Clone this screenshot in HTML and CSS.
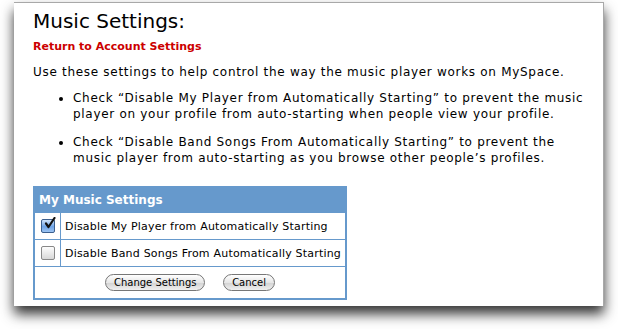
FILE: index.html
```html
<!DOCTYPE html>
<html lang="en">
<head>
    <meta charset="UTF-8">
    <title>Music Settings</title>
    <link rel="stylesheet" href="styles.css">
</head>
<body>
    <div class="window">
        <h1>Music Settings:</h1>
        <a class="back-link" href="#">Return to Account Settings</a>
        <p class="intro">Use these settings to help control the way the music player works on MySpace.</p>
        <ul class="tips">
            <li>Check &ldquo;Disable My Player from Automatically Starting&rdquo; to prevent the music player on your profile from auto-starting when people view your profile.</li>
            <li>Check &ldquo;Disable Band Songs From Automatically Starting&rdquo; to prevent the music player from auto-starting as you browse other people&rsquo;s profiles.</li>
        </ul>
        <table class="settings">
            <tr>
                <th colspan="2">My Music Settings</th>
            </tr>
            <tr>
                <td class="check-cell">
                    <span class="checkbox checked">
                        <svg width="13" height="13" viewBox="0 0 13 13"><path d="M3 6.5 L5.5 10 L11.5 1" fill="none" stroke="#111" stroke-width="2.2" stroke-linecap="round" stroke-linejoin="round"/></svg>
                    </span>
                </td>
                <td>Disable My Player from Automatically Starting</td>
            </tr>
            <tr>
                <td class="check-cell"><span class="checkbox"></span></td>
                <td>Disable Band Songs From Automatically Starting</td>
            </tr>
            <tr>
                <td colspan="2" class="actions">
                    <button class="btn">Change Settings</button>
                    <button class="btn">Cancel</button>
                </td>
            </tr>
        </table>
    </div>
</body>
</html>
```

FILE: styles.css
```css
html {
    height: 100%;
}
body {
    margin: 0;
    min-height: 100%;
    overflow: hidden;
    background: #fff;
    font-family: "DejaVu Sans", Verdana, sans-serif;
    color: #000;
}
.window {
    margin: 2px 0 0 14px;
    width: 570px;
    height: 297px;
    padding: 6px 0 0 19px;
    background: #fff;
    border-top: 1px solid #a8a8a8;
    border-right: 1px solid #a8a8a8;
    box-shadow: 0 8px 12px rgba(0, 0, 0, 0.8);
}
.window h1 {
    margin: 0;
    font-size: 20px;
    font-weight: normal;
    line-height: 24px;
}
.back-link {
    display: block;
    margin-top: 7px;
    font-size: 11px;
    font-weight: bold;
    line-height: 14px;
    color: #cc0000;
    text-decoration: none;
}
.intro {
    margin: 10px 0 0;
    font-size: 12px;
    line-height: 16px;
    letter-spacing: 0.7px;
}
.tips {
    margin: 10px 0 0;
    padding-left: 40px;
    font-size: 12px;
    line-height: 16px;
    letter-spacing: 0.7px;
    width: 518px;
}
.tips li + li {
    margin-top: 12px;
}
.settings {
    margin-top: 20px;
    border-collapse: collapse;
    border: 2px solid #6699cc;
    width: 314px;
    font-size: 11px;
    letter-spacing: 0.2px;
}
.settings th {
    background: #6699cc;
    color: #fff;
    text-align: left;
    font-size: 12px;
    letter-spacing: 0;
    height: 24px;
    padding: 0 4px;
}
.settings td {
    border: 1px solid #6699cc;
    height: 26px;
    padding: 0 1px 0 4px;
    white-space: nowrap;
}
.settings .check-cell {
    width: 17px;
    padding: 0 4px;
    text-align: center;
}
.checkbox {
    display: inline-block;
    width: 12px;
    height: 12px;
    border: 1px solid #888;
    border-radius: 2px;
    background: linear-gradient(#fdfdfd, #d8d8d8);
    vertical-align: middle;
    position: relative;
}
.checkbox.checked {
    border-color: #3b5f8e;
    background: linear-gradient(#cfe3fa, #6ea3e6 55%, #9cc4f2);
}
.checkbox svg {
    position: absolute;
    left: 1px;
    top: -3px;
}
.actions {
    text-align: center;
}
.settings .actions {
    height: 31px;
    padding: 0;
}
.btn {
    font-family: inherit;
    font-size: 10px;
    height: 17px;
    padding: 0 8px;
    margin: 0 7px;
    border: 1px solid #777;
    border-radius: 9px;
    background: linear-gradient(#ffffff, #e6e6e6 50%, #d2d2d2 51%, #f0f0f0);
    color: #000;
}
```
